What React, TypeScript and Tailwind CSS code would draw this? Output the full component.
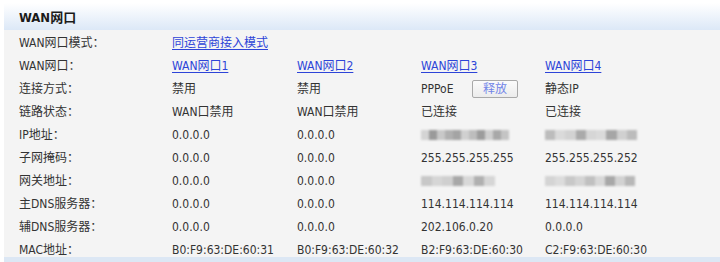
import React from "react";

const font = {
  fontFamily:
    '"DejaVu Sans Condensed", "Liberation Sans", "Noto Sans CJK SC", sans-serif',
};

type Cell = React.ReactNode;

function Blur({ w, shades }: { w: number; shades: string[] }) {
  return (
    <div className="flex h-[10px] items-center blur-[1.2px]" style={{ width: w }}>
      {shades.map((c, i) => (
        <div key={i} className="h-full flex-1" style={{ background: c }} />
      ))}
    </div>
  );
}

function Link({ children }: { children: React.ReactNode }) {
  return (
    <a href="#" className="text-[#2d44d8] underline underline-offset-2">
      {children}
    </a>
  );
}

const rows: [string, Cell, Cell, Cell, Cell][] = [
  ["WAN网口：", <Link>WAN网口1</Link>, <Link>WAN网口2</Link>, <Link>WAN网口3</Link>, <Link>WAN网口4</Link>],
  [
    "连接方式：",
    "禁用",
    "禁用",
    <div className="flex items-center">
      <span className="w-[51px]">PPPoE</span>
      <button className="flex h-[18px] w-[46px] items-center justify-center rounded-[2px] border border-[#a9a9a9] bg-gradient-to-b from-[#fbfbfb] to-[#ececec] text-[#7285e8]">
        释放
      </button>
    </div>,
    "静态IP",
  ],
  ["链路状态：", "WAN口禁用", "WAN口禁用", "已连接", "已连接"],
  [
    "IP地址：",
    "0.0.0.0",
    "0.0.0.0",
    <Blur w={88} shades={["#d4d4d4", "#9a9a9a", "#c8c8c8", "#b0b0b0", "#a4a4a4", "#d0d0d0", "#bdbdbd", "#9c9c9c", "#cfcfcf", "#a8a8a8", "#c4c4c4"]} />,
    <Blur w={92} shades={["#bcbcbc", "#dadada", "#d2d2d2", "#aaaaaa", "#d6d6d6", "#dadada", "#a6a6a6", "#d0d0d0", "#bcbcbc"]} />,
  ],
  ["子网掩码：", "0.0.0.0", "0.0.0.0", "255.255.255.255", "255.255.255.252"],
  [
    "网关地址：",
    "0.0.0.0",
    "0.0.0.0",
    <Blur w={74} shades={["#c8c8c8", "#d6d6d6", "#cfcfcf", "#a8a8a8", "#d8d8d8", "#b0b0b0", "#d6d6d6"]} />,
    <Blur w={90} shades={["#d4d4d4", "#dcdcdc", "#c8c8c8", "#d4d4d4", "#c0c0c0", "#d8d8d8", "#a8a8a8", "#d2d2d2", "#b8b8b8"]} />,
  ],
  ["主DNS服务器：", "0.0.0.0", "0.0.0.0", "114.114.114.114", "114.114.114.114"],
  ["辅DNS服务器：", "0.0.0.0", "0.0.0.0", "202.106.0.20", "0.0.0.0"],
  ["MAC地址：", "B0:F9:63:DE:60:31", "B0:F9:63:DE:60:32", "B2:F9:63:DE:60:30", "C2:F9:63:DE:60:30"],
];

export default function App() {
  return (
    <div className="h-[262px] w-[720px] overflow-hidden bg-white pt-[3px] pl-[4px]" style={font}>
      <div className="flex h-full flex-col bg-[#f4f4f4]">
        {/* title bar */}
        <div className="flex h-[27px] shrink-0 items-center bg-gradient-to-b from-white to-[#dce8f7] pt-[2px] pl-[15px] text-[13px] font-bold text-[#1a1a1a]">
          WAN网口
        </div>

        <div className="flex min-h-0 flex-1 flex-col overflow-hidden pt-[1px] text-[12px] text-[#333]">
          <div className="flex h-[23px] shrink-0 items-center">
            <div className="w-[168px] pl-[15px]">WAN网口模式：</div>
            <Link>同运营商接入模式</Link>
          </div>
          {rows.map((r, i) => (
            <div key={i} className="grid h-[23px] shrink-0 grid-cols-[168px_125px_124px_124px_1fr] items-center">
              <div className="pl-[15px]">{r[0]}</div>
              <div>{r[1]}</div>
              <div>{r[2]}</div>
              <div>{r[3]}</div>
              <div>{r[4]}</div>
            </div>
          ))}
        </div>

        <div className="h-[5px] shrink-0 bg-[#dce7f4]" />
      </div>
    </div>
  );
}
